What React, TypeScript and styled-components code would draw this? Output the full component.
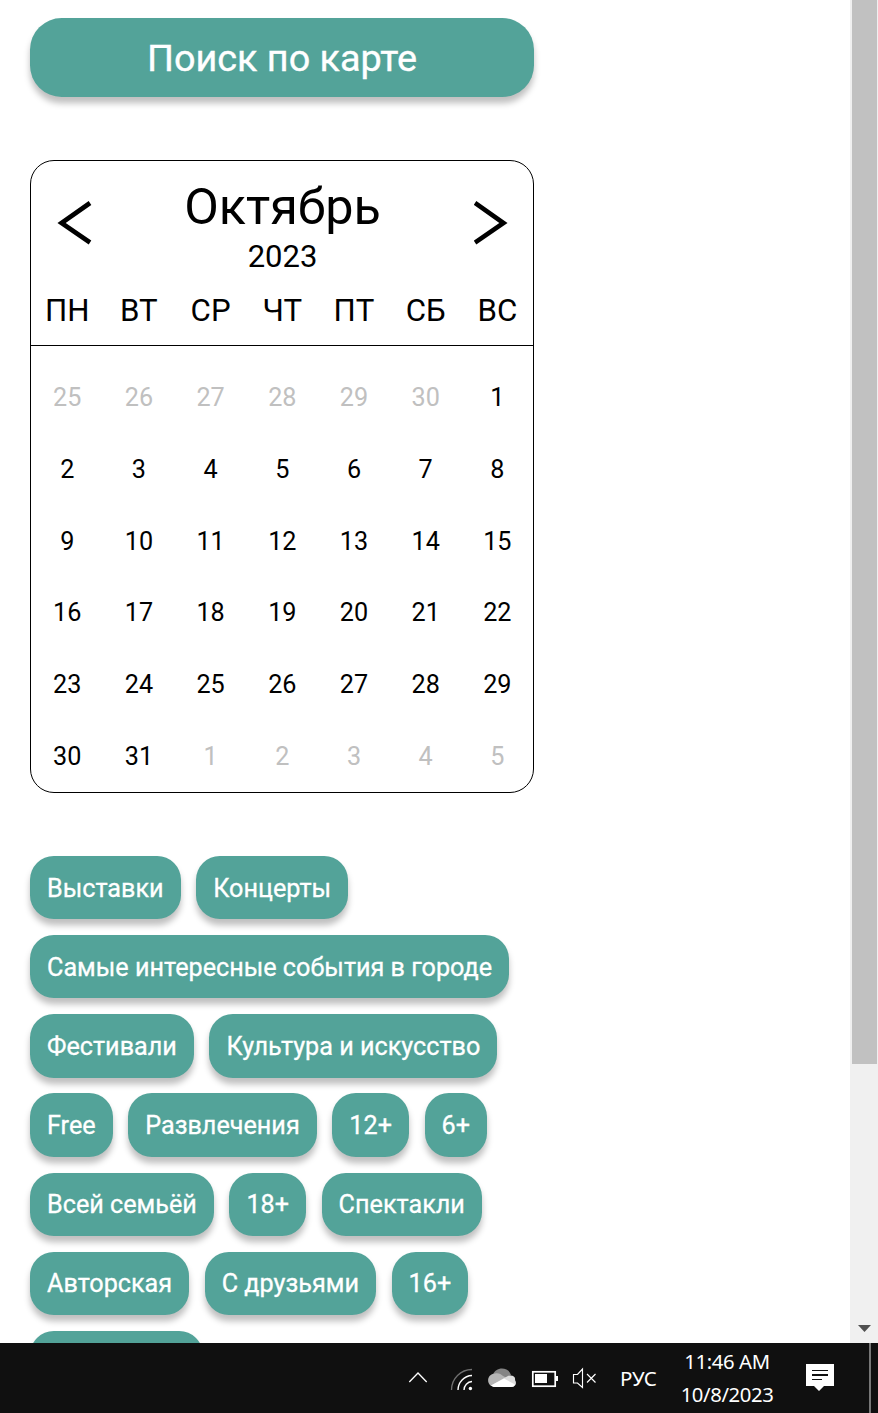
import React from 'react';
import styled, { createGlobalStyle } from 'styled-components';

const GlobalStyle = createGlobalStyle`
  * { box-sizing: border-box; }
  body { margin: 0; background: #fff; font-family: Roboto, sans-serif; color: #000; }
  button { font: inherit; color: inherit; border: 0; margin: 0; padding: 0; background: none; }
`;

const Screen = styled.div`
  display: flex;
  flex-direction: column;
  width: 878px;
  height: 1413px;
  overflow: hidden;
`;

const Browser = styled.div`
  display: flex;
  height: 1343px;
  overflow: hidden;
`;

const Content = styled.main`
  flex: 1;
  padding: 18px 0 0 30px;
`;

const MapButton = styled.button`
  display: flex;
  align-items: center;
  justify-content: center;
  width: 504px;
  height: 79px;
  padding-top: 2px;
  border-radius: 31.7px;
  background: #53a399;
  color: #fff;
  font-size: 37.8px;
  -webkit-text-stroke: 0.35px #fff;
  line-height: 45px;
  box-shadow: 0 6.3px 6.3px rgba(0, 0, 0, 0.25);
`;

const Calendar = styled.section`
  width: 504px;
  height: 633px;
  margin-top: 63px;
  border: 1px solid #000;
  border-radius: 24px;
`;

const CalendarHead = styled.header`
  display: flex;
  justify-content: space-between;
  height: 120px;
  padding: 0 24px 0 26px;
`;

const Arrow = styled.button`
  display: flex;
  margin-top: 39px;
  height: 46px;
`;

const Title = styled.div`
  padding: 16px 1px 0 0;
  text-align: center;
`;

const Month = styled.div`
  font-size: 50.3px;
  line-height: 60px;
`;

const Year = styled.div`
  font-size: 31px;
  line-height: 40px;
`;

const Weekdays = styled.div`
  display: grid;
  grid-template-columns: repeat(7, 71.7px);
  height: 65px;
  padding-left: 0.4px;
  border-bottom: 1px solid #000;
  font-size: 31.2px;
  line-height: 60px;
  text-align: center;
`;

const Days = styled.div`
  display: grid;
  grid-template-columns: repeat(7, 71.7px);
  grid-auto-rows: 71.7px;
  padding: 16.05px 0 0 0.4px;
`;

const Day = styled.div<{ $muted: boolean }>`
  display: flex;
  align-items: center;
  justify-content: center;
  font-size: 25.2px;
  color: ${({ $muted }) => ($muted ? '#c0c0c0' : '#000')};
`;

const Tags = styled.div`
  display: flex;
  flex-wrap: wrap;
  gap: 15.85px 15.6px;
  width: 504px;
  margin-top: 63px;
`;

const Tag = styled.button`
  height: 63.3px;
  padding: 0.6px 17px 0;
  border-radius: 23.8px;
  background: #53a399;
  color: #fff;
  font-size: 25.2px;
  -webkit-text-stroke: 0.3px #fff;
  line-height: 63.3px;
  white-space: nowrap;
  box-shadow: 0 6.3px 6.3px rgba(0, 0, 0, 0.25);
`;

const TagPlaceholder = styled(Tag)`
  width: 173px;
`;

const ScrollTrack = styled.div`
  display: flex;
  flex-direction: column;
  align-items: center;
  justify-content: space-between;
  width: 28px;
  background: #f0f0f0;
`;

const ScrollThumb = styled.div`
  align-self: flex-start;
  width: 25px;
  height: 1064px;
  margin-left: 2px;
  background: #c1c1c1;
`;

const ScrollArrow = styled.svg`
  margin: 0 0 10px 1px;
`;

const Taskbar = styled.footer`
  display: flex;
  align-items: center;
  height: 70px;
  padding-left: 408px;
  background: #101010;
  color: #fff;
  font-family: 'Noto Sans', sans-serif;
  font-size: 20px;
`;

const TrayIcons = styled.svg`
  flex: none;
`;

const Language = styled.div`
  width: 40px;
  margin-left: 20px;
  font-size: 20.5px;
`;

const Clock = styled.div`
  width: 100px;
  margin-left: 17px;
  line-height: 33px;
  text-align: center;
  white-space: nowrap;
  font-size: 20.3px;
  letter-spacing: -0.4px;
`;

const Notifications = styled.svg`
  margin-left: 29px;
`;

const DesktopEdge = styled.div`
  width: 9px;
  height: 70px;
  margin-left: auto;
  border-left: 2px solid #777;
`;

const weekdays = ['ПН', 'ВТ', 'СР', 'ЧТ', 'ПТ', 'СБ', 'ВС'];

const days = [
  ...[25, 26, 27, 28, 29, 30].map((n) => ({ n, muted: true })),
  ...Array.from({ length: 31 }, (_, i) => ({ n: i + 1, muted: false })),
  ...[1, 2, 3, 4, 5].map((n) => ({ n, muted: true })),
];

const tags = [
  'Выставки', 'Концерты', 'Самые интересные события в городе', 'Фестивали',
  'Культура и искусство', 'Free', 'Развлечения', '12+', '6+', 'Всей семьёй',
  '18+', 'Спектакли', 'Авторская', 'С друзьями', '16+',
];

export default function App() {
  return (
    <Screen>
      <GlobalStyle />
      <Browser>
        <Content>
          <MapButton>Поиск по карте</MapButton>
          <Calendar>
            <CalendarHead>
              <Arrow aria-label="Предыдущий месяц">
                <svg width="35" height="46" fill="none" stroke="#000" strokeWidth="4.6">
                  <path d="M33 3 L4.5 23 L33 42.5" />
                </svg>
              </Arrow>
              <Title>
                <Month>Октябрь</Month>
                <Year>2023</Year>
              </Title>
              <Arrow aria-label="Следующий месяц">
                <svg width="35" height="46" fill="none" stroke="#000" strokeWidth="4.6">
                  <path d="M1 3 L29.5 23 L1 42.5" />
                </svg>
              </Arrow>
            </CalendarHead>
            <Weekdays>
              {weekdays.map((d) => <span key={d}>{d}</span>)}
            </Weekdays>
            <Days>
              {days.map((d, i) => <Day key={i} $muted={d.muted}>{d.n}</Day>)}
            </Days>
          </Calendar>
          <Tags>
            {tags.map((t) => <Tag key={t}>{t}</Tag>)}
            <TagPlaceholder />
          </Tags>
        </Content>
        <ScrollTrack>
          <ScrollThumb />
          <ScrollArrow width="14" height="8">
            <path d="M0 0H13L6.5 7Z" fill="#505050" />
          </ScrollArrow>
        </ScrollTrack>
      </Browser>
      <Taskbar>
        <TrayIcons width="192" height="36" viewBox="408 1360 192 36" fill="none">
          <path d="M409.3 1382 L418 1373 L426.7 1382" stroke="#fff" strokeWidth="1.3" />
          <path d="M451.5 1390 A20.5 20.5 0 0 1 472 1369.5" stroke="#707070" strokeWidth="1.3" />
          <path d="M458 1390 A14.5 14.5 0 0 1 472 1375.5 M464 1390 A8.5 8.5 0 0 1 472 1381.5" stroke="#fff" strokeWidth="1.4" />
          <circle cx="470.4" cy="1388.5" r="1.7" fill="#fff" />
          <path d="M493 1375 C495 1367 508 1366 511 1375 L504 1381 Z" fill="#858585" />
          <path d="M494 1387 C486 1386 486 1374 495 1373.5 C498 1372.5 501 1374 503 1376 L511 1380 Z" fill="#b5b5b5" />
          <path d="M491 1385.5 L507 1376.5 C511 1374 516 1376 515 1380 C517 1383 516 1387 511 1387 H494 Z" fill="#dedede" />
          <path d="M491 1385.5 L504 1378.5 L515 1384.5 Q514 1387 511 1387 H494 Z" fill="#fff" />
          <rect x="532.8" y="1371.8" width="22.4" height="14.4" stroke="#fff" strokeWidth="1.7" />
          <path d="M535 1374H547V1383H535Z M556 1376H558V1381H556Z" fill="#fff" />
          <path d="M573.5 1374.5H577.5L582.5 1369V1387.5L577.5 1383H573.5Z M587 1374L595.5 1382.5M595.5 1374L587 1382.5" stroke="#fff" strokeWidth="1.15" />
        </TrayIcons>
        <Language>РУС</Language>
        <Clock>
          <div>11:46 AM</div>
          <div>10/8/2023</div>
        </Clock>
        <Notifications width="28" height="28">
          <path d="M0 0H28V22H18L13 27L8 22H0Z" fill="#fff" />
          <path d="M6 6.5H22M6 15.5H16" stroke="#101010" strokeWidth="1.2" />
          <path d="M6 11H22" stroke="#101010" strokeWidth="2" />
        </Notifications>
        <DesktopEdge />
      </Taskbar>
    </Screen>
  );
}
